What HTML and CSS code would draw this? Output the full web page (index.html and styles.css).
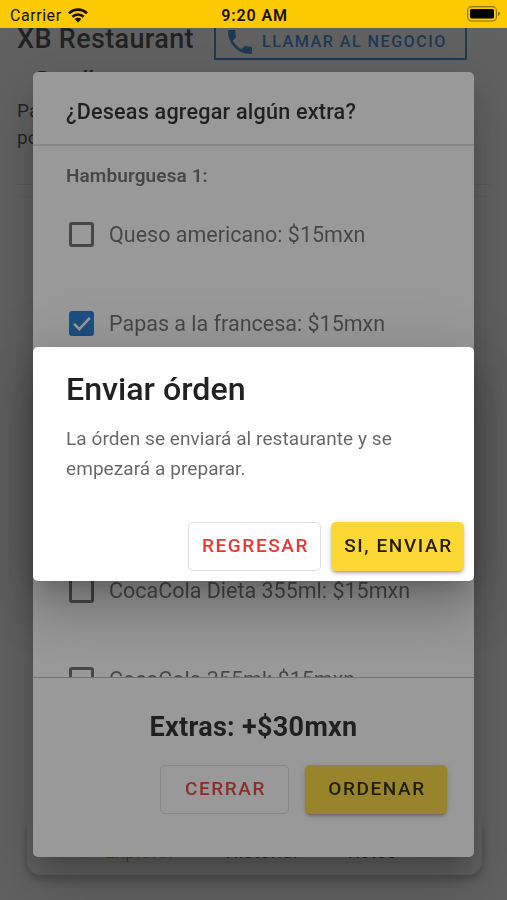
FILE: index.html
```
<!DOCTYPE html>
<html lang="es">

<head>
  <meta charset="UTF-8">
  <meta name="viewport" content="width=device-width, initial-scale=1.0">
  <title>XB Restaurant</title>
  <link rel="stylesheet" href="styles.css">
</head>

<body>
  <header class="status-bar">
    <div class="carrier">
      <span>Carrier</span>
      <svg class="wifi" viewBox="0 0 20 15">
        <path d="M1 5.4C6 .3 14 .3 19 5.4" />
        <path d="M4.4 8.8c3.2-3.1 8-3.1 11.2 0" />
        <path class="dot" d="M6.6 11.1c2-1.8 4.8-1.8 6.8 0L10 14.6z" />
      </svg>
    </div>
    <strong class="time">9:20 AM</strong>
    <svg class="battery" viewBox="0 0 33 16">
      <rect class="case" x=".6" y=".6" width="28.8" height="14.4" rx="4" />
      <rect x="3" y="3" width="24" height="9.6" rx="1.6" />
      <path class="tip" d="M31 5.6q2 .6 2 2.2t-2 2.2z" />
    </svg>
  </header>

  <main class="page">
    <div class="page-top">
      <h1>XB Restaurant</h1>
      <a class="call">
        <svg viewBox="0 0 24 24">
          <path d="M6.62 10.79c1.44 2.83 3.76 5.14 6.59 6.59l2.2-2.2c.27-.27.67-.36 1.02-.24 1.12.37 2.33.57 3.57.57.55 0 1 .45 1 1V20c0 .55-.45 1-1 1C10.61 21 3 13.39 3 4c0-.55.45-1 1-1h3.5c.55 0 1 .45 1 1 0 1.25.2 2.45.57 3.57.11.35.03.74-.25 1.02z" />
        </svg>
        LLAMAR AL NEGOCIO
      </a>
    </div>
    <h2>Detalles</h2>
    <p class="details">Papas<br>por</p>
    <div class="divider"></div>
    <div class="divider light"></div>
    <nav class="tabs">
      <a class="active">Explorar</a>
      <a>Historial</a>
      <a>Retos</a>
    </nav>
  </main>

  <div class="overlay">
    <section class="dialog extras">
      <h3>¿Deseas agregar algún extra?</h3>
      <div class="options">
        <h4>Hamburguesa 1:</h4>
        <div class="option"><span class="box"></span>Queso americano: $15mxn</div>
        <div class="option">
          <span class="box checked"><svg viewBox="0 0 24 24"><path d="M3.5 12.5l6 6L21.5 5.5" /></svg></span>
          Papas a la francesa: $15mxn
        </div>
        <div class="option"></div>
        <div class="option"></div>
        <div class="option"><span class="box"></span>CocaCola Dieta 355ml: $15mxn</div>
        <div class="option"><span class="box"></span>CocaCola 355ml: $15mxn</div>
      </div>
      <footer>
        <p class="total">Extras: +$30mxn</p>
        <div class="buttons">
          <button class="btn outlined">CERRAR</button>
          <button class="btn yellow">ORDENAR</button>
        </div>
      </footer>
    </section>
  </div>

  <div class="overlay">
    <section class="dialog confirm">
      <h3>Enviar órden</h3>
      <p>La órden se enviará al restaurante y se empezará a preparar.</p>
      <div class="buttons">
        <button class="btn outlined">REGRESAR</button>
        <button class="btn yellow">SI, ENVIAR</button>
      </div>
    </section>
  </div>
</body>

</html>
```

FILE: styles.css
```
* {
  box-sizing: border-box;
}

body {
  margin: 0;
  height: 900px;
  overflow: hidden;
  font-family: Roboto, sans-serif;
  color: rgba(0, 0, 0, 0.87);
  background-color: #fff;
}

h1, h2, h3, h4, p {
  margin: 0;
}

.status-bar {
  position: fixed;
  top: 0;
  left: 0;
  right: 0;
  z-index: 10;
  height: 28px;
  padding: 2px 8px 0 10px;
  display: grid;
  grid-template-columns: 1fr auto 1fr;
  align-items: center;
  background-color: #fdca02;
  color: #151000;
  font-size: 16px;
}

.carrier {
  display: flex;
  align-items: center;
  gap: 6px;
  letter-spacing: 0.55px;
}

.wifi {
  width: 20px;
  height: 15px;
  fill: none;
  stroke: #151000;
  stroke-width: 2.6;
}

.wifi .dot {
  fill: #151000;
  stroke: none;
}

.time {
  font-weight: 600;
  letter-spacing: 0.9px;
}

.battery {
  justify-self: end;
  width: 33px;
  height: 16px;
  margin: -2px -1px 0 0;
}

.battery .case {
  fill: none;
  stroke: #8a6f05;
  stroke-width: 1.1;
}

.battery .tip {
  fill: #8a6f05;
}

.page {
  height: 900px;
  padding: 18px 17px 25px;
  display: flex;
  flex-direction: column;
}

.page-top {
  display: flex;
  justify-content: space-between;
  height: 43px;
  padding-right: 23px;
}

h1 {
  font-size: 27px;
  line-height: 43px;
  font-weight: 500;
  letter-spacing: 0.35px;
  white-space: nowrap;
}

.call {
  display: flex;
  flex-shrink: 0;
  align-items: center;
  gap: 6px;
  width: 253px;
  height: 42px;
  padding: 5px 0 0 8px;
  border: 2px solid #1976d2;
  color: #1976d2;
  font-size: 16.2px;
  font-weight: 500;
  letter-spacing: 1.45px;
  white-space: nowrap;
}

.call svg {
  width: 32px;
  height: 32px;
  fill: #1976d2;
}

h2 {
  margin: 7px 0 0 20px;
  font-size: 22px;
  line-height: 24px;
}

.details {
  margin-top: 5px;
  font-size: 19px;
  line-height: 27px;
}

.divider {
  margin-top: 33px;
  border-top: 1px solid #e0e0e0;
}

.divider.light {
  margin-top: 11px;
  border-color: #f0f0f0;
}

.tabs {
  margin: auto 0 0 10px;
  width: 455px;
  height: 53px;
  padding: 21px 85px 0 78px;
  display: flex;
  justify-content: space-between;
  border-radius: 0 0 14px 14px;
  background-color: #fff;
  box-shadow: 0 5px 10px rgba(0, 0, 0, 0.3);
  font-size: 18px;
  line-height: 18px;
}

.tabs a {
  letter-spacing: 0.6px;
}

.tabs .active {
  color: #a8a010;
}

.overlay {
  position: fixed;
  inset: 0;
  padding: 28px 33px 0;
  display: flex;
  align-items: center;
  background-color: rgba(33, 33, 33, 0.46);
}

.dialog {
  width: 441px;
  border-radius: 5px;
  background-color: #fff;
  box-shadow: 0 15px 20px -9px rgba(0, 0, 0, 0.2), 0 32px 51px 4px rgba(0, 0, 0, 0.14), 0 12px 62px 11px rgba(0, 0, 0, 0.12);
}

.extras {
  height: 785px;
  display: flex;
  flex-direction: column;
}

.extras h3 {
  height: 74px;
  padding: 18px 33px 0;
  border-bottom: 2px solid #dedede;
  font-size: 21.6px;
  line-height: 43px;
  font-weight: 500;
  letter-spacing: 0.2px;
}

.options {
  height: 531px;
  padding: 15px 33px 0;
  overflow: hidden;
  color: rgba(0, 0, 0, 0.6);
}

.options h4 {
  font-size: 19px;
  line-height: 30px;
  font-weight: 600;
  letter-spacing: 0.1px;
}

.option {
  height: 89px;
  padding: 28px 0 29px 3px;
  display: flex;
  align-items: center;
  gap: 15px;
  font-size: 21.5px;
}

.box {
  width: 25px;
  height: 25px;
  border: 3px solid rgba(0, 0, 0, 0.6);
  border-radius: 3px;
}

.box.checked {
  border: none;
  background-color: #1976d2;
}

.box svg {
  display: block;
  width: 25px;
  height: 25px;
  padding: 2px;
  fill: none;
  stroke: #fff;
  stroke-width: 3;
}

footer {
  flex: 1;
  padding: 30px 27px 0;
  border-top: 1px solid #b8b8b8;
}

.total {
  text-align: center;
  font-size: 27px;
  line-height: 38px;
  font-weight: 700;
  letter-spacing: 0.3px;
}

.buttons {
  display: flex;
  justify-content: flex-end;
}

.btn {
  height: 49px;
  padding: 0 0 2px 2px;
  border: none;
  border-radius: 5px;
  font-family: Roboto, sans-serif;
  font-size: 19px;
  font-weight: 500;
  letter-spacing: 1.6px;
}

.outlined {
  border: 1px solid #dfdfdf;
  background: none;
  color: #e53935;
}

.yellow {
  background-color: #fdd835;
  color: rgba(0, 0, 0, 0.87);
  box-shadow: 0 4px 2px -3px rgba(0, 0, 0, 0.2), 0 3px 3px rgba(0, 0, 0, 0.14), 0 1px 7px rgba(0, 0, 0, 0.12);
}

.extras .buttons {
  margin-top: 19px;
  gap: 16px;
}

.extras .outlined {
  width: 129px;
}

.extras .yellow {
  width: 142px;
}

.confirm {
  height: 234px;
  padding: 21px 10px 0 33px;
}

.confirm h3 {
  font-size: 32.2px;
  line-height: 43px;
  font-weight: 500;
}

.confirm p {
  width: 375px;
  margin-top: 13px;
  font-size: 19px;
  line-height: 30px;
  letter-spacing: 0.07px;
  color: rgba(0, 0, 0, 0.6);
}

.confirm .buttons {
  margin-top: 38px;
  gap: 10px;
}

.confirm .btn {
  width: 133px;
}
```
